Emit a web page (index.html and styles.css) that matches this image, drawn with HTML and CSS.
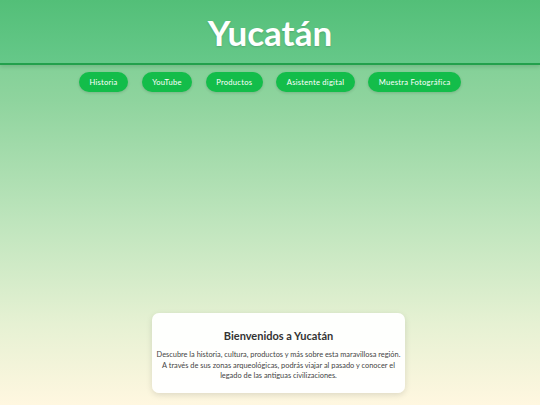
FILE: index.html
```html
<!DOCTYPE html>
<html lang="es">
<head>
<meta charset="utf-8">
<title>Yucatán</title>
<link rel="stylesheet" href="styles.css">
</head>
<body>
<header class="site-header">
  <h1 class="site-title">Yucatán</h1>
</header>
<nav class="main-nav">
  <a class="nav-btn" href="#">Historia</a>
  <a class="nav-btn" href="#">YouTube</a>
  <a class="nav-btn" href="#">Productos</a>
  <a class="nav-btn" href="#">Asistente digital</a>
  <a class="nav-btn" href="#">Muestra Fotográfica</a>
</nav>
<main class="content">
  <section class="welcome-card">
    <h2 class="welcome-title">Bienvenidos a Yucatán</h2>
    <p class="welcome-text">Descubre la historia, cultura, productos y más sobre esta maravillosa región.<br>A través de sus zonas arqueológicas, podrás viajar al pasado y conocer el<br>legado de las antiguas civilizaciones.</p>
  </section>
</main>
</body>
</html>
```
FILE: styles.css
```css
html, body {
  margin: 0;
  padding: 0;
  height: 100%;
}
body {
  font-family: Lato, "Noto Sans", sans-serif;
  background: linear-gradient(180deg, #6fca8c 0%, #8fd49e 25%, #bfe5bd 55%, #e6f1d3 80%, #fff7e0 100%);
  display: flex;
  flex-direction: column;
  min-height: 405px;
  overflow: hidden;
}
.site-header {
  height: 63px;
  background: linear-gradient(180deg, #53bf78 0%, #66c889 100%);
  border-bottom: 2px solid #23a04c;
  box-shadow: 0 2px 4px rgba(0,0,0,0.12);
  display: flex;
  align-items: center;
  justify-content: center;
}
.site-title {
  margin: 0;
  color: #ffffff;
  font-size: 35px;
  font-weight: bold;
  letter-spacing: 0;
  text-shadow: 0 1px 2px rgba(0,0,0,0.15);
}
.main-nav {
  display: flex;
  justify-content: center;
  gap: 13.5px;
  padding-top: 7px;
}
.nav-btn {
  display: inline-flex;
  align-items: center;
  height: 20px;
  padding: 0 10.5px;
  border-radius: 10px;
  background: #13bd4a;
  color: #ffffff;
  font-size: 7.6px;
  letter-spacing: 0.25px;
  text-decoration: none;
  box-shadow: 0 1px 3px rgba(0,0,0,0.15);
}
.content {
  flex: 1;
  display: flex;
  align-items: flex-end;
  justify-content: center;
  padding-bottom: 12px;
  padding-left: 17px;
}
.welcome-card {
  width: 253px;
  box-sizing: border-box;
  height: 80px;
  background: rgba(255,255,255,0.95);
  border-radius: 7px;
  box-shadow: 0 2px 6px rgba(0,0,0,0.12);
  padding: 16px 2px 0;
  text-align: center;
}
.welcome-title {
  margin: 0 0 8px;
  font-size: 11px;
  font-weight: bold;
  color: #333333;
}
.welcome-text {
  margin: 0;
  font-size: 7.4px;
  line-height: 10.5px;
  color: #444444;
  white-space: nowrap;
}
```
